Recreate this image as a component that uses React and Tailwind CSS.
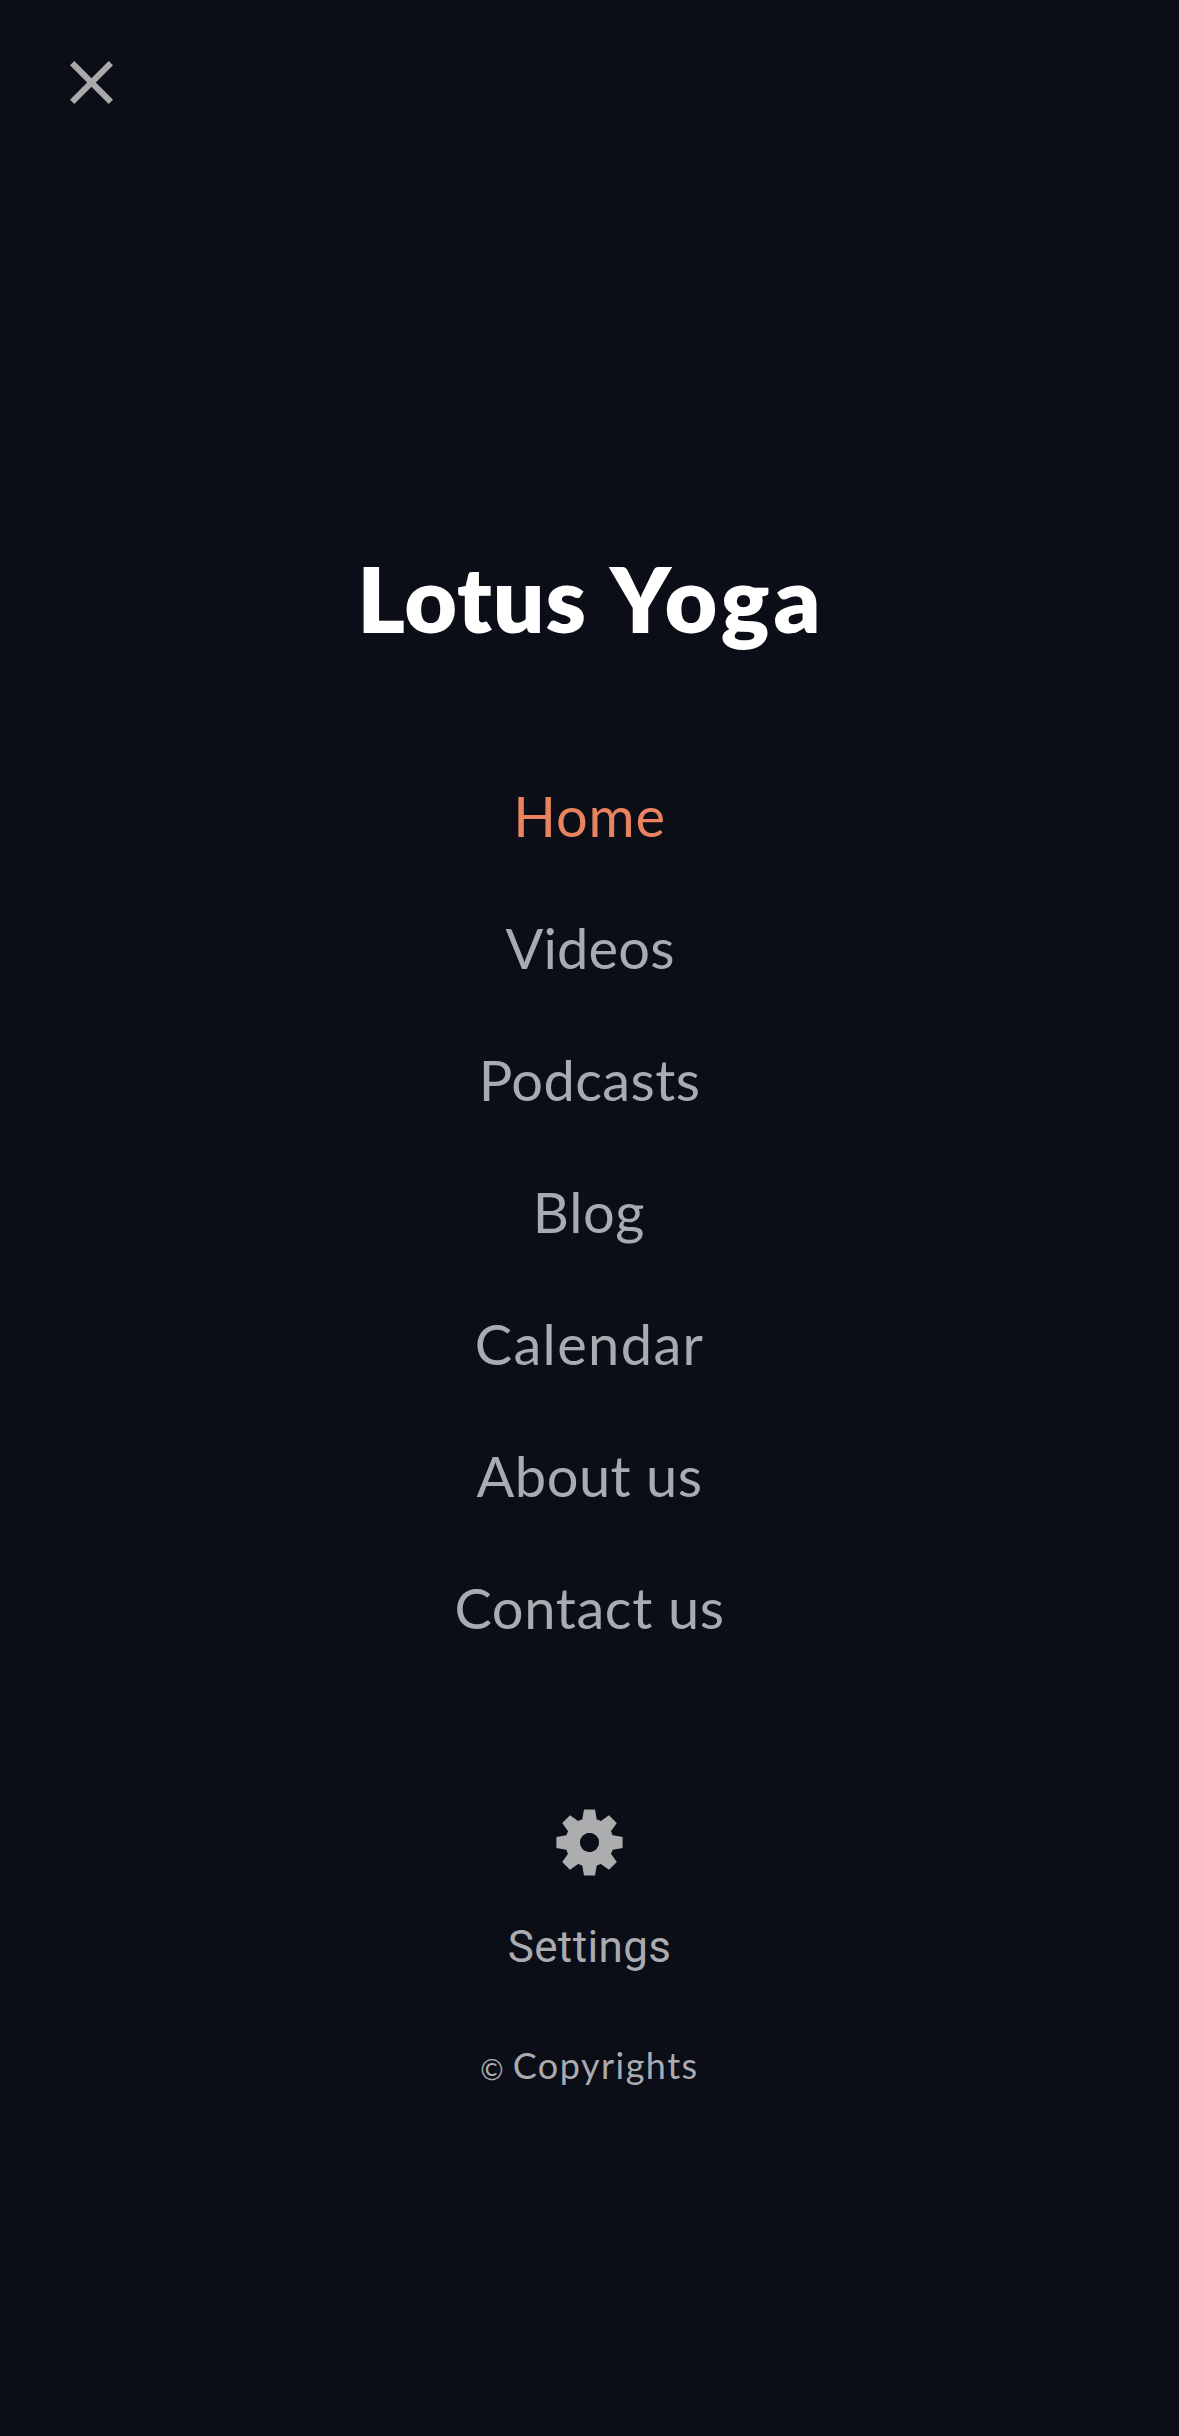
const links = [
  { label: 'Home', style: 'text-[#e9835f] tracking-[0.87px]' },
  { label: 'Videos', style: 'text-[#a9abb0] tracking-[0.13px] pl-px' },
  { label: 'Podcasts', style: 'text-[#a9abb0] tracking-[0.4px]' },
  { label: 'Blog', style: 'text-[#a9abb0] tracking-[0.7px] pr-px' },
  { label: 'Calendar', style: 'text-[#a9abb0] tracking-[1.36px]' },
  { label: 'About us', style: 'text-[#a9abb0] tracking-[0.5px]' },
  { label: 'Contact us', style: 'text-[#a9abb0] tracking-[0.62px]' },
];

function CloseIcon() {
  return (
    <svg className="size-[43px]" viewBox="0 0 43 43" fill="#aaaaac" aria-hidden="true">
      <path d="M43 4.3 38.7 0 21.5 17.2 4.3 0 0 4.3 17.2 21.5 0 38.7 4.3 43 21.5 25.8 38.7 43 43 38.7 25.8 21.5Z" />
    </svg>
  );
}

const teeth = ['rotate(0)', 'rotate(45)', 'rotate(90)', 'rotate(135)', 'rotate(180)', 'rotate(225)', 'rotate(270)', 'rotate(315)'];

function GearIcon() {
  return (
    <svg className="h-[67px] w-[67px]" viewBox="-33.5 -33.5 67 67" aria-hidden="true">
      <g fill="#acadae">
        {teeth.map((t) => (
          <path key={t} transform={t} d="M-5.5-33.1H5.5L7.4-22V-10H-7.4V-22Z" />
        ))}
      </g>
      <circle r="16.8" fill="none" stroke="#acadae" strokeWidth="14.8" />
      <circle r="9.4" fill="#0b0d17" />
    </svg>
  );
}

export default function App() {
  return (
    <main className="flex min-h-[2436px] w-full flex-col bg-[#0b0d17] font-['Lato',sans-serif]">
      <header className="flex h-[543px] items-start pt-[61px] pl-[70px]">
        <button type="button" aria-label="Close menu">
          <CloseIcon />
        </button>
      </header>

      <h1 className="h-[207px] pl-[3px] text-center text-[91px] leading-[110px] font-extrabold tracking-[2.2px] text-white">
        <span className="tracking-[0.8px]">Lotus</span> <span className="tracking-[4px]">Yoga</span>
      </h1>

      <nav className="flex flex-col text-center text-[56px] leading-[132px]">
        {links.map(({ label, style }) => (
          <a key={label} href="#" className={style}>
            {label}
          </a>
        ))}
      </nav>

      <footer className="flex flex-col items-center pt-[135px] text-[#a9abb0]">
        <button type="button" className="flex flex-col items-center gap-[45px]">
          <GearIcon />
          <span className="font-['Roboto',sans-serif] text-[44px] leading-[52px] tracking-[0.38px]">
            Settings
          </span>
        </button>
        <p className="mt-[70px] flex items-baseline gap-[9px] text-[36px] leading-[44px] tracking-[1.48px]">
          <span className="relative top-px text-[28px] tracking-normal">©</span>
          <span>Copyrights</span>
        </p>
      </footer>
    </main>
  );
}
